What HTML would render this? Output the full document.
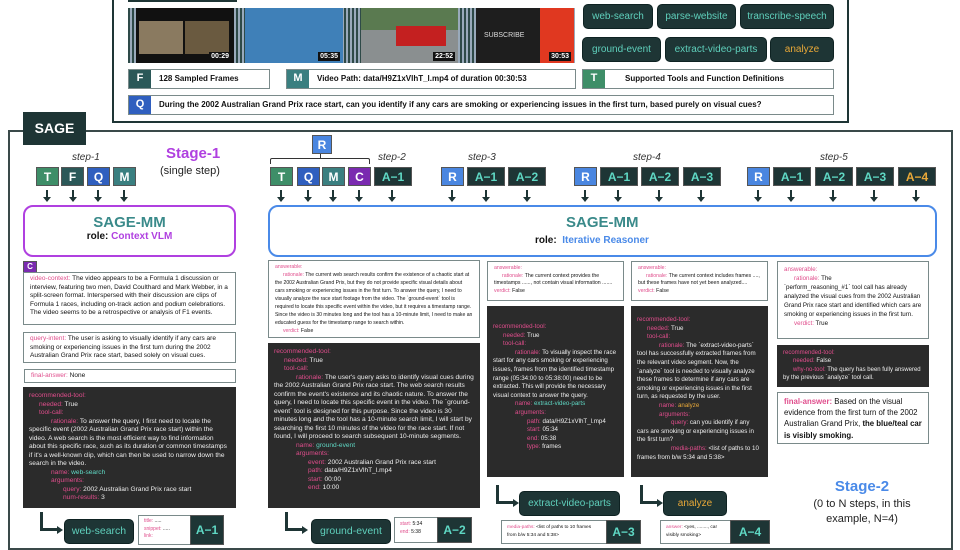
<!DOCTYPE html>
<html><head><meta charset="utf-8"><style>
*{margin:0;padding:0;box-sizing:border-box}
body{width:960px;height:540px;overflow:hidden;background:#fff;font-family:"Liberation Sans","DejaVu Sans",sans-serif;position:relative;color:#111}
.a{position:absolute}
.tk{position:absolute;top:167px;height:19px;color:#fff;font-size:12px;font-weight:bold;text-align:center;line-height:19px;border:1px solid #555}
.T{background:#3e8e68}.F{background:#2b5858}.Q{background:#2f5fbf}.M{background:#3a7f80}.C{background:#7a2ab0}.R{background:#4a86e0}
.A{background:#1e3535;color:#5fd8c4}
.ar{position:absolute;top:190px;width:2px;height:8px;background:#1e3535}
.ar:after{content:"";position:absolute;left:-3px;top:7px;border-left:4px solid transparent;border-right:4px solid transparent;border-top:5px solid #1e3535}
.btn{position:absolute;background:#1e3535;color:#5fd0bc;border-radius:5px;text-align:center;font-size:10px;border:1px solid #0e2222}
.wb{position:absolute;background:#fff;border:1.5px solid #7a8a8a;font-size:5.3px;line-height:8.3px;padding:2px 6px;overflow:hidden}
.dk{position:absolute;background:#2b2b2b;color:#eee;font-size:5.6px;line-height:8.6px;padding:4px 6px;overflow:hidden}
.p{color:#e04d8c}.g{color:#5fd8c4}.o{color:#e8a838}
.i1{padding-left:10px}.i2{padding-left:22px}.i3{padding-left:34px}.i4{padding-left:46px}
.step{position:absolute;top:152px;font-size:10px;font-style:italic;color:#333}
.lab{position:absolute;top:69px;height:20px;border:1.5px solid #7a8a8a;font-size:8px;font-weight:bold;line-height:17px;background:#fff}
.lab b{display:inline-block;width:22px;height:100%;color:#fff;text-align:center;font-size:11px;margin-right:8px;vertical-align:top}
.Lh{position:absolute;border-left:3px solid #1e3535;border-bottom:3px solid #1e3535}
.Lh:after{content:"";position:absolute;right:-6px;bottom:-6px;border-top:4.5px solid transparent;border-bottom:4.5px solid transparent;border-left:6px solid #1e3535}
.fr{position:absolute;top:8px;height:55px;background:repeating-linear-gradient(90deg,#2e4a48 0 2px,#9ab 2px 4px)}
.ts{position:absolute;bottom:2px;right:3px;background:#111;color:#fff;font-size:7px;font-weight:bold;padding:1px 2px}
</style></head><body>

<!-- top box -->
<div class="a" style="left:112px;top:-4px;width:737px;height:127px;border:2px solid #1e3535"></div>
<div class="a" style="left:128px;top:-3px;width:109px;height:5px;background:#1e3535"></div>
<div class="fr" style="left:128px;width:447px"></div>
<div class="a" style="left:136px;top:8px;width:98px;height:55px;background:#111"><div class="a" style="left:3px;top:13px;width:44px;height:33px;background:#8a7a60"></div><div class="a" style="left:49px;top:13px;width:44px;height:33px;background:#6a5a40"></div><div class="ts">00:29</div></div>
<div class="a" style="left:245px;top:8px;width:98px;height:55px;background:#3f80b8"><div class="ts">05:35</div></div>
<div class="a" style="left:361px;top:8px;width:97px;height:55px;background:#8a8f90"><div class="a" style="left:0;top:0;width:97px;height:22px;background:#5a7a50"></div><div class="a" style="left:35px;top:18px;width:50px;height:20px;background:#c42020"></div><div class="ts">22:52</div></div>
<div class="a" style="left:476px;top:8px;width:98px;height:55px;background:#1e1e1e"><div class="a" style="right:0;top:0;width:34px;height:55px;background:#e03820"></div><div class="a" style="left:8px;top:24px;color:#ddd;font-size:7px">SUBSCRIBE</div><div class="ts">30:53</div></div>

<div class="btn" style="left:583px;top:4px;width:70px;height:25px;line-height:23px">web-search</div>
<div class="btn" style="left:657px;top:4px;width:79px;height:25px;line-height:23px">parse-website</div>
<div class="btn" style="left:740px;top:4px;width:94px;height:25px;line-height:23px">transcribe-speech</div>
<div class="btn" style="left:582px;top:37px;width:79px;height:25px;line-height:23px">ground-event</div>
<div class="btn" style="left:665px;top:37px;width:102px;height:25px;line-height:23px">extract-video-parts</div>
<div class="btn" style="left:770px;top:37px;width:64px;height:25px;line-height:23px;color:#e8a838">analyze</div>

<div class="lab" style="left:128px;width:142px"><b class="F">F</b>128 Sampled Frames</div>
<div class="lab" style="left:286px;width:290px"><b class="M">M</b>Video Path: data/H9Z1xVlhT_l.mp4 of duration 00:30:53</div>
<div class="lab" style="left:582px;width:252px"><b class="T">T</b><span style="margin-left:12px">Supported Tools and Function Definitions</span></div>
<div class="lab" style="left:128px;top:95px;width:706px"><b class="Q">Q</b>During the 2002 Australian Grand Prix race start, can you identify if any cars are smoking or experiencing issues in the first turn, based purely on visual cues?</div>

<!-- SAGE frame -->
<div class="a" style="left:8px;top:130px;width:945px;height:420px;border:2px solid #3a4a4a"></div>
<div class="a" style="left:23px;top:112px;width:63px;height:33px;background:#1e3535;color:#fff;font-weight:bold;font-size:14px;text-align:center;line-height:33px">SAGE</div>

<div class="step" style="left:72px">step-1</div>
<div class="a" style="left:166px;top:145px;color:#b040e0;font-weight:bold;font-size:15px">Stage-1</div>
<div class="a" style="left:160px;top:165px;font-size:11px;color:#222">(single step)</div>
<div class="tk T" style="left:36px;width:23px">T</div><div class="ar" style="left:46px"></div>
<div class="tk F" style="left:61px;width:23px">F</div><div class="ar" style="left:72px"></div>
<div class="tk Q" style="left:87px;width:23px">Q</div><div class="ar" style="left:97px"></div>
<div class="tk M" style="left:113px;width:23px">M</div><div class="ar" style="left:123px"></div>

<div class="a" style="left:23px;top:205px;width:213px;height:52px;border:2px solid #b040e0;border-radius:10px;text-align:center">
<div style="color:#3a8a8a;font-weight:bold;font-size:15px;margin-top:7px">SAGE-MM</div>
<div style="font-size:10px;font-weight:bold">role: <span style="color:#b040e0">Context VLM</span></div></div>

<!-- step 2 -->
<div class="tk R" style="left:312px;top:135px;width:20px">R</div>
<div class="a" style="left:270px;top:158px;width:100px;height:6px;border:1px solid #333;border-bottom:none;border-radius:2px 2px 0 0"></div>
<div class="a" style="left:320px;top:154px;width:1px;height:5px;background:#333"></div>
<div class="step" style="left:378px">step-2</div>
<div class="tk T" style="left:270px;width:23px">T</div><div class="ar" style="left:280px"></div>
<div class="tk Q" style="left:297px;width:23px">Q</div><div class="ar" style="left:307px"></div>
<div class="tk M" style="left:322px;width:23px">M</div><div class="ar" style="left:332px"></div>
<div class="tk C" style="left:348px;width:23px">C</div><div class="ar" style="left:358px"></div>
<div class="tk A" style="left:374px;width:38px">A−1</div><div class="ar" style="left:391px"></div>

<div class="step" style="left:468px">step-3</div>
<div class="tk R" style="left:441px;width:23px">R</div><div class="ar" style="left:451px"></div>
<div class="tk A" style="left:467px;width:38px">A−1</div><div class="ar" style="left:485px"></div>
<div class="tk A" style="left:508px;width:38px">A−2</div><div class="ar" style="left:526px"></div>

<div class="step" style="left:633px">step-4</div>
<div class="tk R" style="left:574px;width:23px">R</div><div class="ar" style="left:584px"></div>
<div class="tk A" style="left:600px;width:38px">A−1</div><div class="ar" style="left:617px"></div>
<div class="tk A" style="left:641px;width:38px">A−2</div><div class="ar" style="left:658px"></div>
<div class="tk A" style="left:683px;width:38px">A−3</div><div class="ar" style="left:700px"></div>

<div class="step" style="left:820px">step-5</div>
<div class="tk R" style="left:747px;width:23px">R</div><div class="ar" style="left:757px"></div>
<div class="tk A" style="left:773px;width:38px">A−1</div><div class="ar" style="left:790px"></div>
<div class="tk A" style="left:815px;width:38px">A−2</div><div class="ar" style="left:832px"></div>
<div class="tk A" style="left:856px;width:38px">A−3</div><div class="ar" style="left:873px"></div>
<div class="tk A" style="left:898px;width:38px;color:#e8a838">A−4</div><div class="ar" style="left:915px"></div>

<div class="a" style="left:268px;top:205px;width:669px;height:52px;border:2px solid #4a8ae8;border-radius:10px">
<div class="a" style="left:296px;top:7px;color:#3a8a8a;font-weight:bold;font-size:15px">SAGE-MM</div>
<div class="a" style="left:265px;top:28px;font-size:10px;font-weight:bold">role:&nbsp; <span style="color:#4a8ae8">Iterative Reasoner</span></div></div>

<!-- column 1 -->
<div class="tk C" style="left:23px;top:261px;width:14px;height:12px;font-size:8px;line-height:10px">C</div>
<div class="wb" style="left:23px;top:272px;width:213px;height:53px;font-size:6.5px;line-height:8.6px;padding:2px 6px"><span class="p">video-context:</span> The video appears to be a Formula 1 discussion or interview, featuring two men, David Coulthard and Mark Webber, in a split-screen format. Interspersed with their discussion are clips of Formula 1 races, including on-track action and podium celebrations. The video seems to be a retrospective or analysis of F1 events.</div>
<div class="wb" style="left:23px;top:332px;width:213px;height:31px;font-size:6.5px;line-height:8.6px;padding:2px 6px"><span class="p">query-intent:</span> The user is asking to visually identify if any cars are smoking or experiencing issues in the first turn during the 2002 Australian Grand Prix race start, based solely on visual cues.</div>
<div class="wb" style="left:24px;top:369px;width:212px;height:14px;font-size:6.5px;line-height:9px;padding:1px 6px"><span class="p">final-answer:</span> None</div>
<div class="dk" style="left:23px;top:387px;width:213px;height:121px;font-size:6.6px;line-height:8.5px;padding:5px 6px">
<div class="p">recommended-tool:</div><div class="i1"><span class="p">needed:</span> True</div><div class="i1 p">tool-call:</div>
<div><span style="padding-left:22px"></span><span class="p">rationale:</span> To answer the query, I first need to locate the specific event (2002 Australian Grand Prix race start) within the video. A web search is the most efficient way to find information about this specific race, such as its duration or common timestamps if it's a well-known clip, which can then be used to narrow down the search in the video.</div>
<div class="i2"><span class="p">name:</span> <span class="g">web-search</span></div><div class="i2 p">arguments:</div>
<div class="i3"><span class="p">query:</span> 2002 Australian Grand Prix race start</div><div class="i3"><span class="p">num-results:</span> 3</div></div>
<div class="Lh" style="left:40px;top:512px;width:17px;height:19px"></div>
<div class="btn" style="left:64px;top:519px;width:70px;height:25px;line-height:23px;font-size:10.5px">web-search</div>
<div class="wb" style="left:138px;top:515px;width:53px;height:30px;font-size:5px;line-height:7.5px;padding:2px 5px"><span class="p">title:</span> .....<br><span class="p">snippet:</span> .....<br><span class="p">link:</span></div>
<div class="tk A" style="left:190px;top:515px;width:34px;height:30px;line-height:28px">A−1</div>

<!-- column 2 -->
<div class="wb" style="left:268px;top:260px;width:212px;height:78px;padding:2px 6px;font-size:5.1px;line-height:8px">
<div class="p">answerable:</div><div><span style="padding-left:8px"></span><span class="p">rationale:</span> The current web search results confirm the existence of a chaotic start at the 2002 Australian Grand Prix, but they do not provide specific visual details about cars smoking or experiencing issues in the first turn. To answer the query, I need to visually analyze the race start footage from the video. The `ground-event` tool is required to locate this specific event within the video, but it requires a timestamp range. Since the video is 30 minutes long and the tool has a 10-minute limit, I need to make an educated guess for the timestamp range to search within.</div><div style="padding-left:8px"><span class="p">verdict:</span> False</div></div>
<div class="dk" style="left:268px;top:343px;width:212px;height:165px;font-size:6.6px;line-height:8.5px;padding:5px 6px">
<div class="p">recommended-tool:</div><div class="i1"><span class="p">needed:</span> True</div><div class="i1 p">tool-call:</div>
<div><span style="padding-left:22px"></span><span class="p">rationale:</span> The user's query asks to identify visual cues during the 2002 Australian Grand Prix race start. The web search results confirm the event's existence and its chaotic nature. To answer the query, I need to locate this specific event in the video. The `ground-event` tool is designed for this purpose. Since the video is 30 minutes long and the tool has a 10-minute search limit, I will start by searching the first 10 minutes of the video for the race start. If not found, I will proceed to search subsequent 10-minute segments.</div>
<div class="i2"><span class="p">name:</span> <span class="g">ground-event</span></div><div class="i2 p">arguments:</div>
<div class="i3"><span class="p">event:</span> 2002 Australian Grand Prix race start</div><div class="i3"><span class="p">path:</span> data/H9Z1xVlhT_l.mp4</div><div class="i3"><span class="p">start:</span> 00:00</div><div class="i3"><span class="p">end:</span> 10:00</div></div>
<div class="Lh" style="left:285px;top:512px;width:17px;height:19px"></div>
<div class="btn" style="left:311px;top:519px;width:80px;height:25px;line-height:23px;font-size:10.5px">ground-event</div>
<div class="wb" style="left:394px;top:517px;width:44px;height:26px;font-size:5px;line-height:7.5px;padding:3px 5px"><span class="p">start:</span> 5:34<br><span class="p">end:</span> 5:38</div>
<div class="tk A" style="left:437px;top:517px;width:35px;height:26px;line-height:24px">A−2</div>

<!-- column 3 -->
<div class="wb" style="left:487px;top:261px;width:137px;height:40px;font-size:5.2px;line-height:7.6px;padding:3px 6px"><div class="p">answerable:</div><div><span style="padding-left:8px"></span><span class="p">rationale:</span> The current context provides the timestamps ......, not contain visual information ....... <span class="p">verdict:</span> False</div></div>
<div class="dk" style="left:487px;top:306px;width:137px;height:171px;font-size:6.2px;line-height:8.6px;padding:17px 6px 4px">
<div class="p">recommended-tool:</div><div class="i1"><span class="p">needed:</span> True</div><div class="i1 p">tool-call:</div>
<div><span style="padding-left:22px"></span><span class="p">rationale:</span> To visually inspect the race start for any cars smoking or experiencing issues, frames from the identified timestamp range (05:34:00 to 05:38:00) need to be extracted. This will provide the necessary visual context to answer the query.</div>
<div class="i2"><span class="p">name:</span> <span class="g">extract-video-parts</span></div><div class="i2 p">arguments:</div>
<div class="i3"><span class="p">path:</span> data/H9Z1xVlhT_l.mp4</div><div class="i3"><span class="p">start:</span> 05:34</div><div class="i3"><span class="p">end:</span> 05:38</div><div class="i3"><span class="p">type:</span> frames</div></div>
<div class="Lh" style="left:496px;top:485px;width:17px;height:19px"></div>
<div class="btn" style="left:519px;top:491px;width:101px;height:25px;line-height:23px;font-size:10px">extract-video-parts</div>
<div class="wb" style="left:501px;top:520px;width:106px;height:24px;font-size:4.8px;line-height:7.5px;padding:3px 5px"><span class="p">media-paths:</span> &lt;list of paths to 10 frames from b/w 5:34 and 5:38&gt;</div>
<div class="tk A" style="left:606px;top:520px;width:35px;height:24px;line-height:22px">A−3</div>

<!-- column 4 -->
<div class="wb" style="left:631px;top:261px;width:137px;height:40px;font-size:5.2px;line-height:7.6px;padding:3px 6px"><div class="p">answerable:</div><div><span style="padding-left:8px"></span><span class="p">rationale:</span> The current context includes frames ...., but these frames have not yet been analyzed.... <span class="p">verdict:</span> False</div></div>
<div class="dk" style="left:631px;top:306px;width:137px;height:171px;font-size:6.2px;line-height:8.6px;padding:10px 6px 4px">
<div class="p">recommended-tool:</div><div class="i1"><span class="p">needed:</span> True</div><div class="i1 p">tool-call:</div>
<div><span style="padding-left:22px"></span><span class="p">rationale:</span> The `extract-video-parts` tool has successfully extracted frames from the relevant video segment. Now, the `analyze` tool is needed to visually analyze these frames to determine if any cars are smoking or experiencing issues in the first turn, as requested by the user.</div>
<div class="i2"><span class="p">name:</span> <span class="o">analyze</span></div><div class="i2 p">arguments:</div>
<div><span style="padding-left:34px"></span><span class="p">query:</span> can you identify if any cars are smoking or experiencing issues in the first turn?</div>
<div><span style="padding-left:34px"></span><span class="p">media-paths:</span> &lt;list of paths to 10 frames from b/w 5:34 and 5:38&gt;</div></div>
<div class="Lh" style="left:640px;top:485px;width:17px;height:19px"></div>
<div class="btn" style="left:663px;top:491px;width:64px;height:25px;line-height:23px;font-size:10px;color:#e8a838">analyze</div>
<div class="wb" style="left:660px;top:520px;width:71px;height:24px;font-size:4.8px;line-height:7.5px;padding:3px 5px"><span class="p">answer:</span> &lt;yes, ........, car visibly smoking&gt;</div>
<div class="tk A" style="left:730px;top:520px;width:40px;height:24px;line-height:22px">A−4</div>

<!-- column 5 -->
<div class="wb" style="left:777px;top:261px;width:152px;height:78px;font-size:6.2px;line-height:9px;padding:3px 6px"><div class="p">answerable:</div><div class="i1"><span class="p">rationale:</span> The</div><div>`perform_reasoning_#1` tool call has already analyzed the visual cues from the 2002 Australian Grand Prix race start and identified which cars are smoking or experiencing issues in the first turn.</div><div class="i1"><span class="p">verdict:</span> True</div></div>
<div class="dk" style="left:777px;top:345px;width:152px;height:42px;font-size:6px;line-height:8.4px;padding:4px 6px">
<div class="p">recommended-tool:</div><div class="i1"><span class="p">needed:</span> False</div><div><span style="padding-left:10px"></span><span class="p">why-no-tool:</span> The query has been fully answered by the previous `analyze` tool call.</div></div>
<div class="wb" style="left:777px;top:392px;width:152px;height:52px;font-size:7.8px;line-height:11.2px;padding:3px 6px"><span class="p" style="font-weight:bold">final-answer:</span> Based on the visual evidence from the first turn of the 2002 Australian Grand Prix, <b>the blue/teal car is visibly smoking.</b></div>

<div class="a" style="left:800px;top:478px;width:124px;text-align:center;color:#4a8ae8;font-weight:bold;font-size:15px">Stage-2</div>
<div class="a" style="left:790px;top:497px;width:144px;text-align:center;font-size:11px;line-height:15px;color:#222">(0 to N steps, in this example, N=4)</div>
</body></html>
